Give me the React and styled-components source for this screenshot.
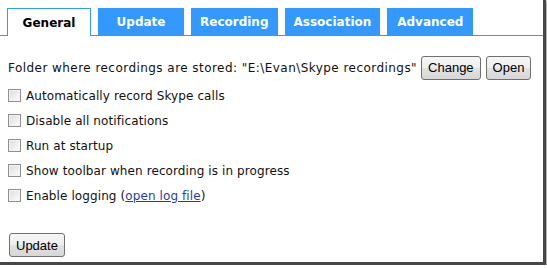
import styled, { createGlobalStyle } from 'styled-components';

const tabs = ['General', 'Update', 'Recording', 'Association', 'Advanced'];

const options = [
  'Automatically record Skype calls',
  'Disable all notifications',
  'Run at startup',
  'Show toolbar when recording is in progress',
];

export default () => {
  return (
    <>
      <GlobalStyle />
      <Frame>
        <TabStrip>
          {tabs.map((name, index) => (
            <Tab key={name} className={index === 0 && 'active'}>
              {name}
            </Tab>
          ))}
        </TabStrip>

        <Panel>
          <FolderRow>
            <FolderText>Folder where recordings are stored: "E:\Evan\Skype recordings"</FolderText>
            <Button>Change</Button>
            <Button>Open</Button>
          </FolderRow>

          <Options>
            {options.map((label) => (
              <OptionRow key={label}>
                <Box />
                {label}
              </OptionRow>
            ))}
            <OptionRow>
              <Box />
              Enable logging (<LogLink href="#">open log file</LogLink>)
            </OptionRow>
          </Options>

          <Footer>
            <Button>Update</Button>
          </Footer>
        </Panel>
      </Frame>
    </>
  );
};

const GlobalStyle = createGlobalStyle`
  html, body {
    margin: 0;
    padding: 0;
    background: #ffffff;
  }
`;

const Frame = styled.div`
  box-sizing: border-box;
  width: 546px;
  height: 265px;
  background: #ffffff;
  border-right: 3px solid #474747;
  border-bottom: 3px solid #474747;
  box-shadow: 1px 1px 2px rgba(0, 0, 0, 0.45);
  font-family: 'DejaVu Sans', Verdana, sans-serif;
  font-size: 12px;
  color: #111;
`;

const TabStrip = styled.div`
  display: flex;
  gap: 7px;
  padding: 8px 0 0 7px;
  border-bottom: 1px solid #3399ff;
`;

const Tab = styled.div`
  box-sizing: border-box;
  min-width: 86px;
  height: 27px;
  padding: 0 8px;
  display: flex;
  align-items: center;
  justify-content: center;
  background: #3399ff;
  border: 1px solid #3399ff;
  border-bottom: none;
  color: #ffffff;
  font-weight: bold;
  font-size: 12px;

  &.active {
    height: 28px;
    margin-bottom: -1px;
    min-width: 84px;
    background: #ffffff;
    color: #000000;
  }
`;

const Panel = styled.div`
  padding: 20px 0 0 8px;
`;

const FolderRow = styled.div`
  display: flex;
  align-items: center;
  height: 23px;
`;

const FolderText = styled.span`
  margin-right: 4px;
  letter-spacing: 0.45px;
  white-space: pre;
`;

const Button = styled.button`
  box-sizing: border-box;
  height: 24px;
  padding: 0 6px;
  margin-right: 5px;
  font-family: 'Liberation Sans', Arial, sans-serif;
  font-size: 13px;
  color: #000;
  border: 1px solid #707070;
  border-radius: 3px;
  background: linear-gradient(#f6f6f6 0%, #eeeeee 50%, #e2e2e2 51%, #d6d6d6 100%);
`;

const Options = styled.div`
  display: flex;
  flex-direction: column;
  margin-top: 4px;
`;

const OptionRow = styled.div`
  display: flex;
  align-items: center;
  height: 25px;
  white-space: pre;
  letter-spacing: 0.1px;
`;

const Box = styled.span`
  box-sizing: border-box;
  width: 13px;
  height: 13px;
  margin-right: 5px;
  border: 1px solid #8e8f8f;
  background: linear-gradient(135deg, #dcdcdc 0%, #f0f0f0 60%, #ffffff 100%);
  box-shadow: inset 0 0 0 1px #f4f4f4;
`;

const LogLink = styled.a`
  color: #1f3f9f;
  text-decoration: underline;
`;

const Footer = styled.div`
  margin-top: 25px;
  padding-left: 1px;
`;
